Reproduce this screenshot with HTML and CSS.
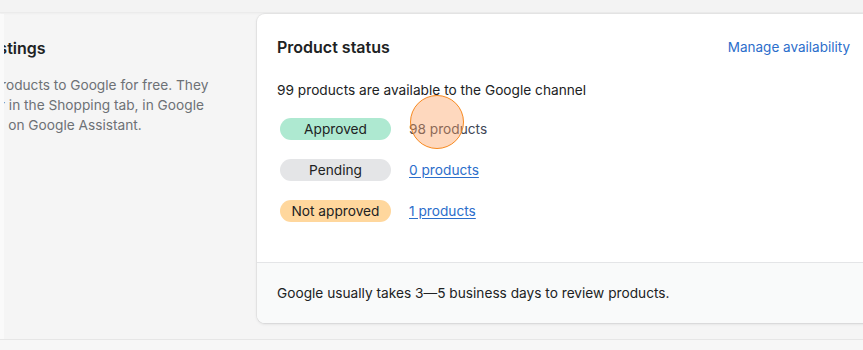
FILE: index.html
```html
<!DOCTYPE html>
<html>
<head>
<meta charset="utf-8">
<link rel="stylesheet" href="styles.css">
</head>
<body>
<div class="page">
  <div class="topbar"></div>
  <div class="layout">
    <div class="edge"></div>
    <section class="intro">
      <div class="intro-inner">
        <h2 class="intro-title">Free listings</h2>
        <p class="intro-text"><span class="line">Show your products to Google for free. They</span><span class="line line-mid">can appear in the Shopping tab, in Google</span><span class="line line-last">Search, and on Google Assistant.</span></p>
      </div>
    </section>
    <section class="card">
      <div class="card-body">
        <div class="card-head">
          <h3 class="card-title">Product status</h3>
          <a class="action" href="#">Manage availability</a>
        </div>
        <p class="summary">99 products are available to the Google channel</p>
        <ul class="status-list">
          <li class="status-row"><span class="badge badge-success">Approved</span><a class="count count-active" href="#">98 products</a><span class="touch"></span></li>
          <li class="status-row"><span class="badge badge-neutral">Pending</span><a class="count" href="#">0 products</a></li>
          <li class="status-row"><span class="badge badge-warning">Not approved</span><a class="count" href="#">1 products</a></li>
        </ul>
      </div>
      <div class="card-footer">Google usually takes 3—5 business days to review products.</div>
    </section>
  </div>
  <div class="bottombar"></div>
</div>
</body>
</html>
```

FILE: styles.css
```css
* { box-sizing: border-box; }
html, body { margin: 0; padding: 0; }
body {
  width: 863px;
  height: 350px;
  overflow: hidden;
  background: #f5f5f5;
  font-family: Inter, "Noto Sans", sans-serif;
  color: #202223;
  -webkit-font-smoothing: antialiased;
}
.page { display: flex; flex-direction: column; height: 350px; }
.topbar {
  height: 13px;
  background: #f3f3f3;
  border-bottom: 1px solid #ebebeb;
  box-shadow: 0 1px 2px rgba(0,0,0,0.03);
  flex: 0 0 auto;
}
.layout {
  display: flex;
  padding-top: 1px;
  height: 326px;
  flex: 0 0 auto;
}
.edge { width: 4px; background: #fafafa; flex: 0 0 auto; }
.intro {
  width: 253px;
  flex: 0 0 auto;
  overflow: hidden;
  padding-top: 24px;
}
.intro-inner { margin-left: -84px; }
.intro-title {
  margin: 0 0 0 32px;
  font-size: 16px;
  font-weight: 600;
  line-height: 20px;
  color: #202223;
  white-space: nowrap;
}
.intro-text {
  margin: 17px 0 0;
  font-size: 13.7px;
  line-height: 20px;
  color: #6d7175;
  white-space: nowrap;
}
.line { display: block; }
.line-mid { padding-left: 12px; }
.line-last { padding-left: 7px; }
.card {
  flex: 0 0 613px;
  background: #fff;
  border-radius: 8px;
  box-shadow: 0 0 0 1px rgba(63,63,68,0.05), 0 1px 3px rgba(63,63,68,0.15);
  height: 309px;
  display: flex;
  flex-direction: column;
  overflow: hidden;
}
.card-body { padding: 22px 20px 0; flex: 1 1 auto; }
.card-head {
  display: flex;
  justify-content: space-between;
  align-items: center;
}
.card-title {
  margin: 0;
  font-size: 16px;
  font-weight: 600;
  line-height: 22px;
}
.action {
  font-size: 13.5px;
  color: #2c6ecb;
  text-decoration: none;
  line-height: 22px;
}
.summary {
  margin: 22px 0 0;
  font-size: 13.7px;
  line-height: 20px;
  color: #202223;
}
.status-list {
  list-style: none;
  margin: 18px 0 0;
  padding: 0 0 0 3px;
  display: flex;
  flex-direction: column;
  gap: 19px;
}
.status-row {
  position: relative;
  display: flex;
  align-items: center;
  gap: 18px;
  height: 22px;
}
.badge {
  width: 111px;
  height: 22px;
  border-radius: 11px;
  display: flex;
  align-items: center;
  justify-content: center;
  font-size: 13.7px;
  color: #202223;
  flex: 0 0 auto;
}
.badge-success { background: #aee9d1; }
.badge-neutral { background: #e4e5e7; }
.badge-warning { background: #ffd79d; }
.count {
  font-size: 13.7px;
  color: #2c6ecb;
  text-decoration: underline;
  text-underline-offset: 2px;
}
.count-active { color: #3f4756; text-decoration: none; }
.touch {
  position: absolute;
  left: 130px;
  top: -23px;
  width: 54px;
  height: 54px;
  border-radius: 50%;
  border: 1.5px solid #f7891f;
  background: rgba(252, 158, 92, 0.4);
}
.card-footer {
  height: 61px;
  flex: 0 0 auto;
  background: #f9fafa;
  border-top: 1px solid #e4e5e7;
  padding: 0 20px;
  display: flex;
  align-items: center;
  font-size: 13.7px;
  color: #202223;
}
.bottombar {
  flex: 1 1 auto;
  border-top: 1px solid #e6e6e6;
  background: #f7f7f7;
}
```
